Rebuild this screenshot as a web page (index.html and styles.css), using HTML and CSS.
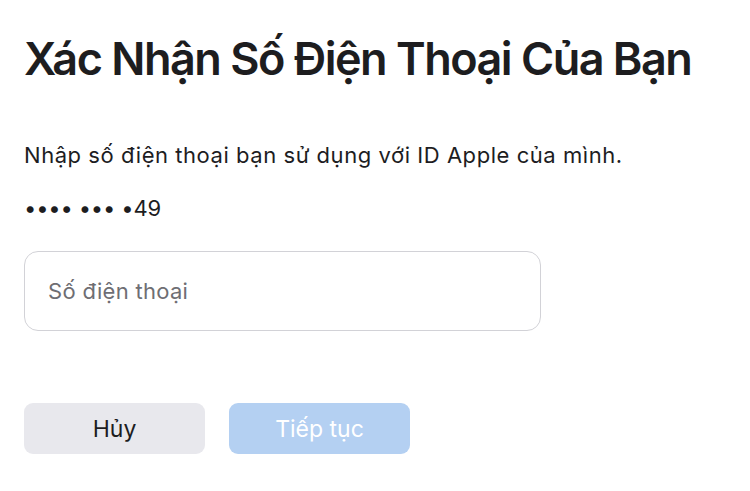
FILE: index.html
```
<!DOCTYPE html>
<html lang="vi">
<head>
<meta charset="utf-8">
<link rel="stylesheet" href="styles.css">
</head>
<body>
<main class="page">
  <h1 class="title">Xác Nhận Số Điện Thoại Của Bạn</h1>
  <p class="lead">Nhập số điện thoại bạn sử dụng với ID Apple của mình.</p>
  <p class="masked">•••• ••• •49</p>
  <div class="field">
    <input class="field-input" type="tel" placeholder="Số điện thoại">
  </div>
  <div class="actions">
    <button class="btn btn-cancel" type="button">Hủy</button>
    <button class="btn btn-next" type="button">Tiếp tục</button>
  </div>
</main>
</body>
</html>
```
FILE: styles.css
```
* { box-sizing: border-box; }
html, body { margin: 0; background: #fff; }
body {
  font-family: Inter, "Noto Sans", "Liberation Sans", sans-serif;
  color: #1d1d1f;
}
.page {
  padding: 31px 24px 0;
}
.title {
  margin: 0;
  font-size: 45px;
  line-height: 56px;
  font-weight: 600;
  letter-spacing: -1.5px;
}
.lead {
  margin: 54px 0 0;
  font-size: 22px;
  line-height: 28px;
  font-weight: 400;
  letter-spacing: 0.55px;
}
.masked {
  margin: 25px 0 0;
  font-size: 22px;
  line-height: 28px;
  letter-spacing: -0.2px;
}
.field {
  margin-top: 29px;
  width: 517px;
  height: 80px;
  border: 1px solid #d2d2d7;
  border-radius: 14px;
  display: flex;
  align-items: center;
}
.field-input {
  border: 0;
  outline: 0;
  background: transparent;
  width: 100%;
  padding: 0 0 0 23px;
  font-family: inherit;
  font-size: 22px;
  letter-spacing: 0.3px;
  color: #1d1d1f;
}
.field-input::placeholder { color: #6e6e73; }
.actions {
  margin-top: 72px;
  display: flex;
  gap: 24px;
}
.btn {
  width: 181px;
  height: 51px;
  border: 0;
  border-radius: 9px;
  font-family: inherit;
  font-size: 23px;
  padding: 0;
}
.btn-cancel { background: #e8e8ed; color: #1d1d1f; }
.btn-next { background: #b4d0f2; color: #fff; }
```
